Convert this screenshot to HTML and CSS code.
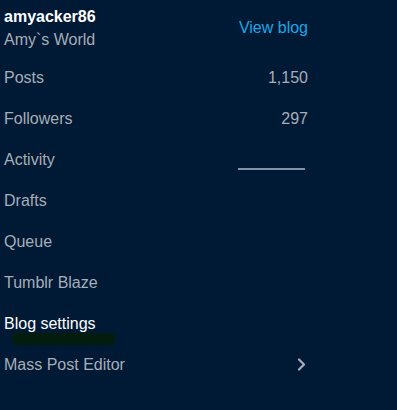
FILE: index.html
```html
<!DOCTYPE html>
<html lang="en">
<head>
  <meta charset="UTF-8">
  <title>Blog menu</title>
  <link rel="stylesheet" href="styles.css">
</head>
<body>
  <div class="panel">
    <!-- blog header -->
    <div class="blog-head">
      <div class="blog-names">
        <div class="blog-user">amyacker86</div>
        <div class="blog-title">Amy`s World</div>
      </div>
      <a class="view-link" href="#">View blog</a>
    </div>

    <div class="row"><span>Posts</span><span class="count">1,150</span></div>
    <div class="row"><span>Followers</span><span class="count">297</span></div>
    <div class="row"><span>Activity</span><span class="spark"></span></div>
    <div class="row"><span>Drafts</span></div>
    <div class="row"><span>Queue</span></div>
    <div class="row"><span>Tumblr Blaze</span></div>
    <div class="row row-active">
      <span>Blog settings</span>
      <span class="scribble"></span>
    </div>
    <div class="row">
      <span>Mass Post Editor</span>
      <svg class="chevron" width="9" height="13" viewBox="0 0 9 13">
        <path d="M2 1.5 L7 6.5 L2 11.5" fill="none" stroke="#a6aeb8" stroke-width="2.2" stroke-linecap="round" stroke-linejoin="round"/>
      </svg>
    </div>
  </div>
</body>
</html>
```

FILE: styles.css
```css
body {
  margin: 0;
  background: #001935;
  font-family: 'Liberation Sans', Arial, sans-serif;
  font-size: 16px;
  color: #a6aeb8;
  height: 410px;
  overflow: hidden;
}

.panel {
  width: 304px;
  padding-left: 4px;
}

.blog-head {
  display: flex;
  justify-content: space-between;
  align-items: center;
  padding: 7px 0 4px;
}

.blog-user {
  color: #fff;
  font-weight: bold;
  line-height: 20px;
}

.blog-title {
  line-height: 26px;
}

.view-link {
  color: #1ca7e6;
  text-decoration: none;
  margin-bottom: 4px;
}

.row {
  position: relative;
  display: flex;
  justify-content: space-between;
  align-items: center;
  height: 41px;
}

.row-active {
  color: #fff;
}

.spark {
  width: 67px;
  height: 2px;
  background: #8593a6;
  margin-top: 18px;
  margin-right: 3px;
}

.scribble {
  position: absolute;
  left: 8px;
  top: 30px;
  width: 103px;
  height: 12px;
  background: #021d0d;
  border-radius: 4px 2px 3px 5px;
}

.chevron {
  margin-right: 2px;
}
```
